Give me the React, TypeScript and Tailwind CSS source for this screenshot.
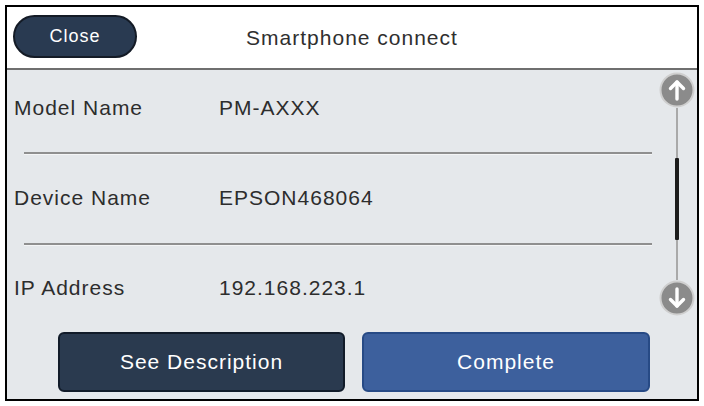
import React from 'react';

const rows = [
  { label: 'Model Name', value: 'PM-AXXX', h: 'h-[83px] pt-[26px]' },
  { label: 'Device Name', value: 'EPSON468064', h: 'h-[88px] pt-[31px]' },
  { label: 'IP Address', value: '192.168.223.1', h: 'h-[85px] pt-[30px]' },
];

const ArrowCircle: React.FC<{ dir: 'up' | 'down' }> = ({ dir }) => (
  <svg width="36" height="36" viewBox="0 0 36 36">
    <circle cx="18" cy="18" r="16.5" fill="#8b8b8b" stroke="#cfcfcf" strokeWidth="2" />
    <g
      stroke="#ffffff"
      strokeWidth="3.4"
      strokeLinecap="round"
      strokeLinejoin="round"
      fill="none"
      transform={dir === 'down' ? 'rotate(180 18 18)' : undefined}
    >
      <path d="M18 27V10" />
      <path d="M11.5 16.5L18 10l6.5 6.5" />
    </g>
  </svg>
);

const App: React.FC = () => {
  return (
    <div className="w-[704px] h-[406px] bg-white p-[5px] font-['Liberation_Sans',Arial,sans-serif]">
      <div className="h-full border-2 border-black flex flex-col bg-[#e5e8eb]">
        {/* Header */}
        <div className="h-[63px] bg-white border-b-2 border-[#6f6f6f] flex items-center relative shrink-0">
          <button className="ml-[6px] mt-[-2px] w-[124px] h-[43px] rounded-full bg-[#293a51] border-2 border-[#141b26] text-white text-[18px] tracking-[1px] font-medium">
            Close
          </button>
          <div className="absolute left-0 right-0 top-[15px] text-center text-[21px] tracking-[1px] text-[#2f2f2f] pointer-events-none">
            Smartphone connect
          </div>
        </div>

        {/* List + scroll bar */}
        <div className="h-[260px] flex shrink-0">
          <div className="flex-1 flex flex-col">
            {rows.map((row, i) => (
              <React.Fragment key={row.label}>
                <div className={`flex items-start pl-[7px] text-[21px] tracking-[1px] text-[#2d2d2d] leading-[24px] ${row.h}`}>
                  <span className="w-[205px]">{row.label}</span>
                  <span>{row.value}</span>
                </div>
                {i < rows.length - 1 && (
                  <div className="ml-[17px] w-[628px] h-[3px] bg-[#8f8f8f] border-b border-[#f4f5f6]" />
                )}
              </React.Fragment>
            ))}
          </div>

          {/* Scroll bar */}
          <div className="w-[45px] flex flex-col items-center pt-[2px] pb-[14px] pl-[4px]">
            <ArrowCircle dir="up" />
            <div className="flex-1 flex flex-col items-center">
              <div className="w-[2px] h-[50px] bg-[#a9a9a9]" />
              <div className="w-[4px] h-[82px] bg-[#1c1c1c] rounded-[1px]" />
              <div className="w-[2px] flex-1 bg-[#a9a9a9]" />
            </div>
            <ArrowCircle dir="down" />
          </div>
        </div>

        {/* Action buttons */}
        <div className="flex gap-[17px] pl-[51px] pt-[2px]">
          <button className="w-[287px] h-[60px] rounded-[6px] bg-[#2a3a4f] border-2 border-[#111b29] text-white text-[21px] tracking-[1px]">
            See Description
          </button>
          <button className="w-[288px] h-[60px] rounded-[6px] bg-[#3d609d] border-2 border-[#274a85] text-white text-[21px] tracking-[1px]">
            Complete
          </button>
        </div>
      </div>
    </div>
  );
};

export default App;
